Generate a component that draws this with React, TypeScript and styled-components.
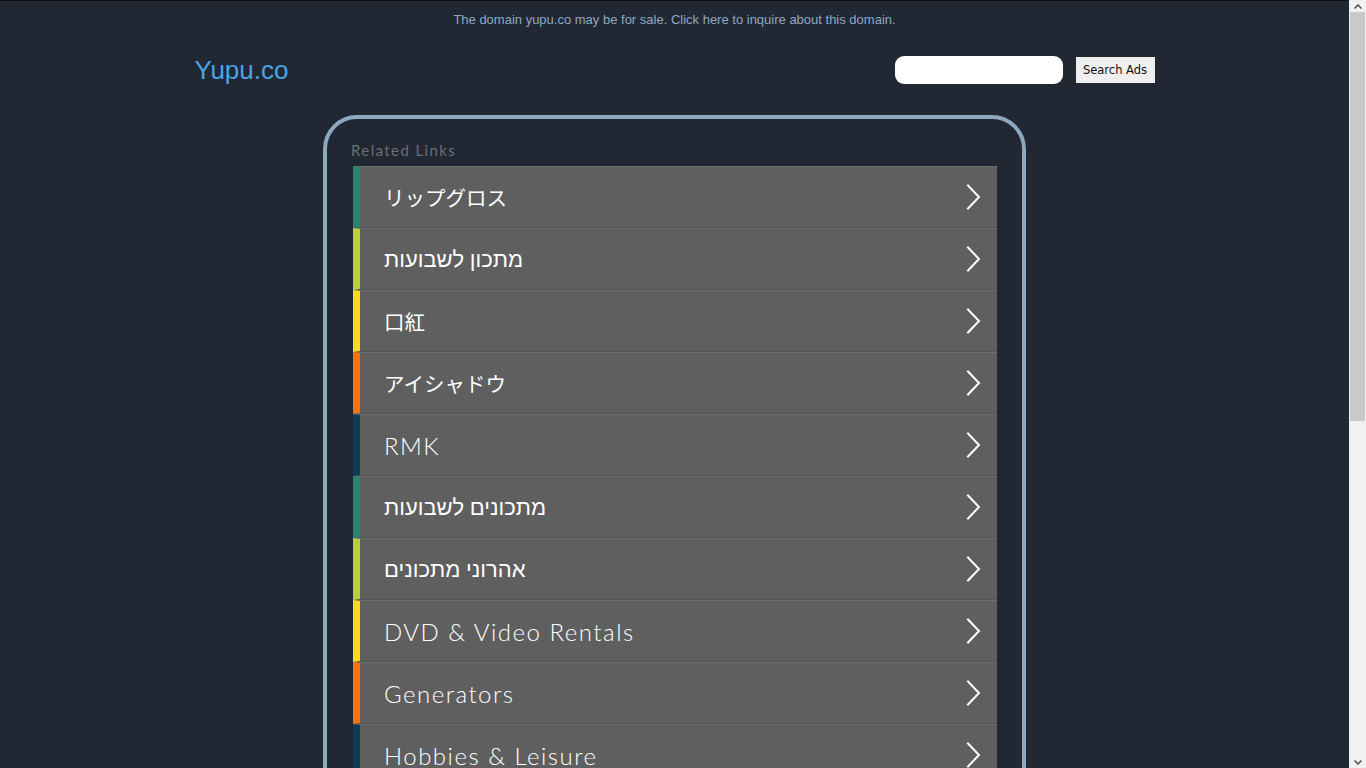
import React from "react";
import styled, { createGlobalStyle } from "styled-components";

const Global = createGlobalStyle`
  html, body { margin: 0; padding: 0; background: #212733; }
  body { font-family: "Liberation Sans", Arial, sans-serif; }
`;

const Page = styled.div`
  min-height: 1400px;
  background: #212733;
  border-top: 1px solid #0c0e12;
  padding-right: 17px;
`;

const ScrollBar = styled.div`
  position: fixed;
  top: 0;
  right: 0;
  width: 17px;
  height: 100vh;
  background: #f1f1f1;
  display: flex;
  flex-direction: column;
  align-items: center;
  z-index: 10;
`;

const ScrollArrow = styled.div`
  height: 12px;
  width: 17px;
  display: flex;
  align-items: center;
  justify-content: center;
`;

const ScrollThumb = styled.div`
  width: 15px;
  height: 409px;
  background: #c9c9c9;
`;

const ScrollSpace = styled.div`
  flex: 1;
`;

const Notice = styled.a`
  display: block;
  text-align: center;
  font-family: "Liberation Sans", Arial, sans-serif;
  font-size: 13px;
  color: #8fa9c2;
  text-decoration: none;
  padding-top: 11px;
  height: 15px;
  line-height: 15px;
`;

const Header = styled.header`
  width: 960px;
  margin: 0 auto;
  display: flex;
  align-items: center;
  justify-content: space-between;
  height: 64px;
  margin-top: 17px;
`;

const Logo = styled.a`
  font-family: "Liberation Sans", Arial, sans-serif;
  font-size: 26px;
  color: #4aa4e6;
  text-decoration: none;
  margin-top: -12px;
`;

const SearchForm = styled.form`
  display: flex;
  align-items: center;
  gap: 13px;
  margin-top: -12px;
`;

const SearchInput = styled.input`
  width: 168px;
  height: 28px;
  box-sizing: border-box;
  border: none;
  border-radius: 9px;
  background: #fff;
  outline: none;
`;

const SearchButton = styled.button`
  width: 79px;
  height: 26px;
  border: none;
  background: #efefef;
  font-family: "DejaVu Sans", Verdana, sans-serif;
  font-size: 11.5px;
  color: #111;
  padding: 0;
`;

const Panel = styled.section`
  width: 703px;
  box-sizing: border-box;
  margin: 7px auto 0;
  border: 4px solid #8ea8bf;
  border-radius: 34px;
  padding: 22px 25px 30px 26px;
`;

const PanelTitle = styled.h2`
  margin: 0 0 7px -2px;
  font-family: "Lato", sans-serif;
  font-weight: 400;
  font-size: 15px;
  letter-spacing: 1.4px;
  color: #6d6f73;
  line-height: 18px;
`;

const List = styled.ul`
  list-style: none;
  margin: 0;
  padding: 0;
`;

const Row = styled.li<{ $accent: string }>`
  height: 62px;
  box-sizing: border-box;
  display: flex;
  align-items: center;
  background: #5f5f5f;
  border-left: 7px solid ${(p) => p.$accent};
  border-top: 1px solid #6d6d6d;
  border-bottom: 1px solid #555;
  padding: 0 16px 0 24px;
`;

const Label = styled.span<{ $size: number; $spacing: number; $weight: number }>`
  flex: 1;
  color: #fff;
  font-family: "Lato", "Liberation Sans", "Noto Sans CJK JP", sans-serif;
  font-weight: ${(p) => p.$weight};
  font-size: ${(p) => p.$size}px;
  letter-spacing: ${(p) => p.$spacing}px;
  white-space: nowrap;
`;

const Chevron = () => (
  <svg width="18" height="28" viewBox="0 0 18 28" fill="none">
    <path d="M5 2.5 L16 14 L5 25.5" stroke="#fff" strokeWidth="2" strokeLinecap="square" />
  </svg>
);

const ArrowGlyph = ({ down }: { down?: boolean }) => (
  <svg width="8" height="5" viewBox="0 0 8 5">
    <path d={down ? "M0.5 0.5 L4 4 L7.5 0.5" : "M0.5 4.5 L4 1 L7.5 4.5"} fill="none" stroke="#505050" strokeWidth="1.5" />
  </svg>
);

type Item = { text: string; kind: "ja" | "he" | "en" };

const items: Item[] = [
  { text: "リップグロス", kind: "ja" },
  { text: "מתכון לשבועות", kind: "he" },
  { text: "口紅", kind: "ja" },
  { text: "アイシャドウ", kind: "ja" },
  { text: "RMK", kind: "en" },
  { text: "מתכונים לשבועות", kind: "he" },
  { text: "אהרוני מתכונים", kind: "he" },
  { text: "DVD & Video Rentals", kind: "en" },
  { text: "Generators", kind: "en" },
  { text: "Hobbies & Leisure", kind: "en" },
  { text: "Magazines", kind: "en" },
  { text: "Photography", kind: "en" },
  { text: "Travel", kind: "en" },
  { text: "Music", kind: "en" },
  { text: "Gifts", kind: "en" },
];

const accents = ["#22876c", "#b7d03a", "#fbdb1c", "#fa7209", "#083f55"];

const sizeOf = (k: Item["kind"]) => (k === "ja" ? 20.5 : k === "he" ? 22 : 24);
const spacingOf = (k: Item["kind"]) => (k === "en" ? 1.5 : 0);
const weightOf = (k: Item["kind"]) => (k === "en" ? 300 : 400);

export default function App() {
  return (
    <>
      <Global />
      <ScrollBar aria-hidden>
        <ScrollArrow>
          <ArrowGlyph />
        </ScrollArrow>
        <ScrollThumb />
        <ScrollSpace />
        <ScrollArrow>
          <ArrowGlyph down />
        </ScrollArrow>
      </ScrollBar>
      <Page>
        <Notice href="#">The domain yupu.co may be for sale. Click here to inquire about this domain.</Notice>
        <Header>
          <Logo href="#">Yupu.co</Logo>
          <SearchForm onSubmit={(e) => e.preventDefault()}>
            <SearchInput type="text" />
            <SearchButton type="submit">Search Ads</SearchButton>
          </SearchForm>
        </Header>
        <Panel>
          <PanelTitle>Related Links</PanelTitle>
          <List>
            {items.map((it, i) => (
              <Row key={i} $accent={accents[i % accents.length]}>
                <Label $size={sizeOf(it.kind)} $spacing={spacingOf(it.kind)} $weight={weightOf(it.kind)}>
                  {it.text}
                </Label>
                <Chevron />
              </Row>
            ))}
          </List>
        </Panel>
      </Page>
    </>
  );
}
